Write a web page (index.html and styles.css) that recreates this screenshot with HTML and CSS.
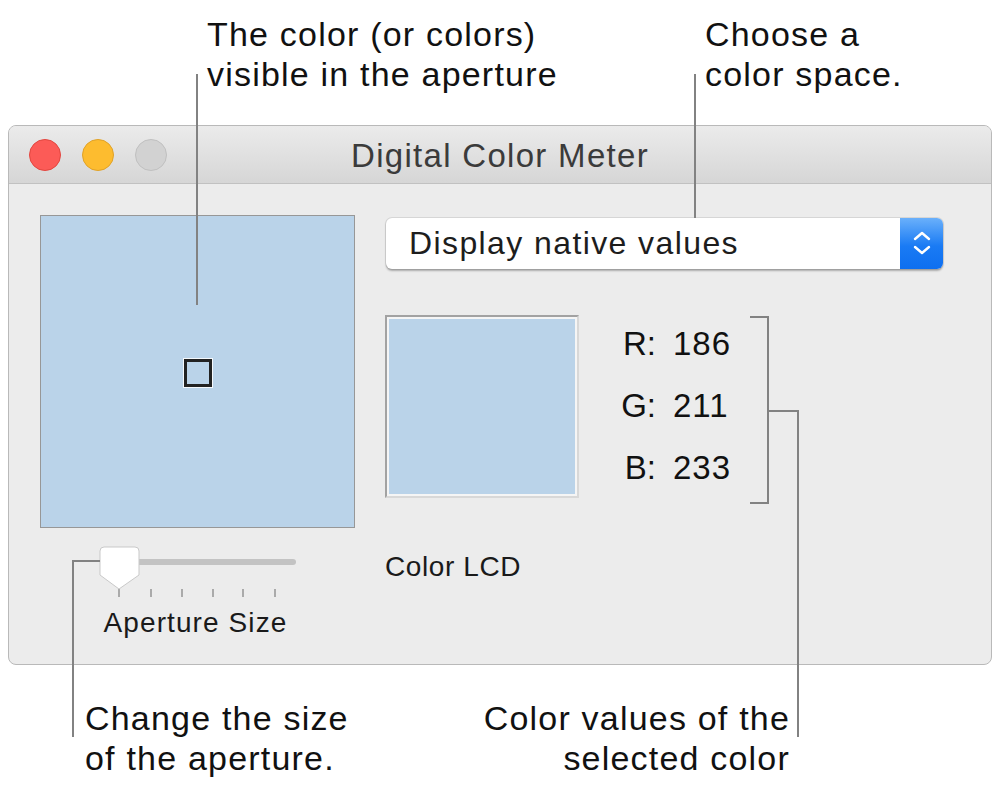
FILE: index.html
```html
<!DOCTYPE html>
<html lang="en">
<head>
  <meta charset="UTF-8">
  <title>Digital Color Meter</title>
  <link rel="stylesheet" href="styles.css">
</head>
<body>
<div class="figure">

  <div class="notes notes-top">
    <div class="note note-aperture">The color (or colors)<br>visible in the aperture</div>
    <div class="note note-space">Choose a<br>color space.</div>
  </div>

  <div class="window">
    <div class="titlebar">
      <div class="lights">
        <span class="light red"></span>
        <span class="light yellow"></span>
        <span class="light grey"></span>
      </div>
      <div class="title">Digital Color Meter</div>
    </div>

    <div class="content">
      <div class="left">
        <div class="aperture">
          <div class="target"></div>
        </div>
        <svg class="slider" width="200" height="54" viewBox="0 0 200 54">
          <rect x="2" y="13" width="195" height="6" rx="3" fill="#c3c3c3"/>
          <g stroke="#9a9a9a" stroke-width="1.6">
            <line x1="20" y1="43" x2="20" y2="51"/>
            <line x1="52" y1="43" x2="52" y2="51"/>
            <line x1="83" y1="43" x2="83" y2="51"/>
            <line x1="114" y1="43" x2="114" y2="51"/>
            <line x1="144" y1="43" x2="144" y2="51"/>
            <line x1="176" y1="43" x2="176" y2="51"/>
          </g>
          <path d="M5 1 H36 Q40 1 40 5 V29 L20 43 L1 29 V5 Q1 1 5 1 Z" fill="#fff" stroke="#c9c9c9" stroke-width="1"/>
        </svg>
        <div class="slider-label">Aperture Size</div>
      </div>

      <div class="right">
        <div class="popup">
          <span class="popup-text">Display native values</span>
          <span class="stepper">
            <svg width="20" height="30" viewBox="0 0 20 30">
              <path d="M3 10 L10 4 L17 10" fill="none" stroke="#fff" stroke-width="2.4" stroke-linecap="round" stroke-linejoin="round"/>
              <path d="M3 18 L10 24 L17 18" fill="none" stroke="#fff" stroke-width="2.4" stroke-linecap="round" stroke-linejoin="round"/>
            </svg>
          </span>
        </div>

        <div class="reading">
          <div class="swatch"></div>
          <div class="values">
            <span class="lbl">R:</span><span class="num">186</span>
            <span class="lbl">G:</span><span class="num">211</span>
            <span class="lbl">B:</span><span class="num">233</span>
          </div>
        </div>

        <div class="display">Color LCD</div>
      </div>
    </div>
  </div>

  <div class="notes notes-bottom">
    <div class="note note-size">Change the size<br>of the aperture.</div>
    <div class="note note-values">Color values of the<br>selected color</div>
  </div>

  <!-- Leader lines -->
  <div class="lead lead-aperture"></div>
  <div class="lead lead-space"></div>
  <div class="lead lead-slider-h"></div>
  <div class="lead lead-slider-v"></div>
  <div class="lead bracket"></div>
  <div class="lead lead-values-h"></div>
  <div class="lead lead-values-v"></div>
</div>
</body>
</html>
```

FILE: styles.css
```css
body {
  margin: 0;
  background: #fff;
  font-family: "Liberation Sans", Arial, sans-serif;
  color: #111;
}
.figure {
  position: relative;
  width: 1000px;
  height: 792px;
}

/* callout texts */
.notes {
  display: flex;
  font-size: 34px;
  line-height: 40px;
  letter-spacing: 1.2px;
  white-space: nowrap;
}
.notes-top {
  height: 125px;
  padding-top: 14px;
  box-sizing: border-box;
}
.note-aperture {
  margin-left: 207px;
  width: 498px;
}
.notes-bottom {
  padding-top: 33px;
}
.note-size {
  margin-left: 85px;
  width: 300px;
}
.note-values {
  width: 405px;
  text-align: right;
}

/* window */
.window {
  margin: 0 8px;
  height: 540px;
  box-sizing: border-box;
  border: 1px solid #b9b9b9;
  border-radius: 8px;
  background: #ececec;
  overflow: hidden;
}
.titlebar {
  position: relative;
  height: 58px;
  box-sizing: border-box;
  background: linear-gradient(#ebebeb, #d6d6d6);
  border-bottom: 1px solid #c1c1c1;
  display: flex;
  align-items: center;
  justify-content: center;
}
.lights {
  position: absolute;
  left: 20px;
  top: 13px;
  display: flex;
  gap: 21px;
}
.light {
  width: 30px;
  height: 30px;
  border-radius: 50%;
  border: 1px solid;
}
.red { background: #fc5b57; border-color: #e2463f; }
.yellow { background: #fdbc2f; border-color: #e0a228; }
.grey { background: #d2d2d2; border-color: #c0c0c0; }
.title {
  font-size: 33px;
  letter-spacing: 1.3px;
  color: #3b3b3b;
  padding-top: 2px;
}

.content {
  display: flex;
  padding: 31px 0 0 31px;
}
.left {
  width: 315px;
  display: flex;
  flex-direction: column;
  align-items: center;
}
.aperture {
  width: 315px;
  height: 313px;
  box-sizing: border-box;
  background: #bad3e9;
  border: 1px solid #979797;
  display: flex;
  align-items: center;
  justify-content: center;
}
.target {
  width: 22px;
  height: 22px;
  border: 3px solid #222;
  outline: 1px solid #f4f8fc;
  margin-top: 2px;
}
.slider {
  display: block;
  margin-top: 18px;
  margin-left: 2px;
}
.slider-label {
  font-size: 28px;
  letter-spacing: 1.1px;
  color: #1a1a1a;
  margin-top: 7px;
  margin-right: 4px;
}

.right {
  margin-left: 30px;
}
.popup {
  width: 557px;
  height: 51px;
  margin-top: 3px;
  margin-left: 1px;
  background: #fff;
  border-radius: 6px;
  box-shadow: 0 0 0 1px rgba(0,0,0,0.08), 0 1.5px 2px rgba(0,0,0,0.28);
  display: flex;
  align-items: center;
  overflow: hidden;
}
.popup-text {
  flex: 1;
  padding-left: 23px;
  font-size: 32px;
  letter-spacing: 1.4px;
  color: #1d1d1d;
}
.stepper {
  width: 43px;
  height: 100%;
  background: linear-gradient(#6ab0fb, #1a7bf4 55%, #0e6ff0);
  display: flex;
  align-items: center;
  justify-content: center;
}
.stepper svg {
  display: block;
}

.reading {
  display: flex;
  align-items: center;
  margin-top: 44px;
}
.swatch {
  width: 194px;
  height: 183px;
  box-sizing: border-box;
  background: #bad3e9;
  border-top: 2px solid #a2a2a2;
  border-left: 2px solid #a2a2a2;
  border-right: 2px solid #d8d8d8;
  border-bottom: 2px solid #d8d8d8;
  box-shadow: inset 0 0 0 2px #f5f5f5;
}
.values {
  display: grid;
  grid-template-columns: 36px auto;
  column-gap: 17px;
  margin-left: 41px;
  font-size: 33px;
  letter-spacing: 1px;
  line-height: 62px;
  color: #111;
}
.lbl {
  text-align: right;
  letter-spacing: 0;
}
.display {
  margin-top: 52px;
  font-size: 28px;
  letter-spacing: 0.6px;
  color: #1a1a1a;
}

/* leader lines */
.lead {
  position: absolute;
  background: #828282;
}
.lead-aperture { left: 196px; top: 74px; width: 2px; height: 231px; }
.lead-space { left: 694px; top: 74px; width: 2px; height: 144px; }
.lead-slider-h { left: 72px; top: 560px; width: 28px; height: 2px; }
.lead-slider-v { left: 72px; top: 560px; width: 2px; height: 177px; }
.bracket {
  left: 750px;
  top: 316px;
  width: 17px;
  height: 184px;
  background: none;
  border: 2px solid #828282;
  border-left: none;
}
.lead-values-h { left: 767px; top: 410px; width: 32px; height: 2px; }
.lead-values-v { left: 797px; top: 410px; width: 2px; height: 327px; }
```
